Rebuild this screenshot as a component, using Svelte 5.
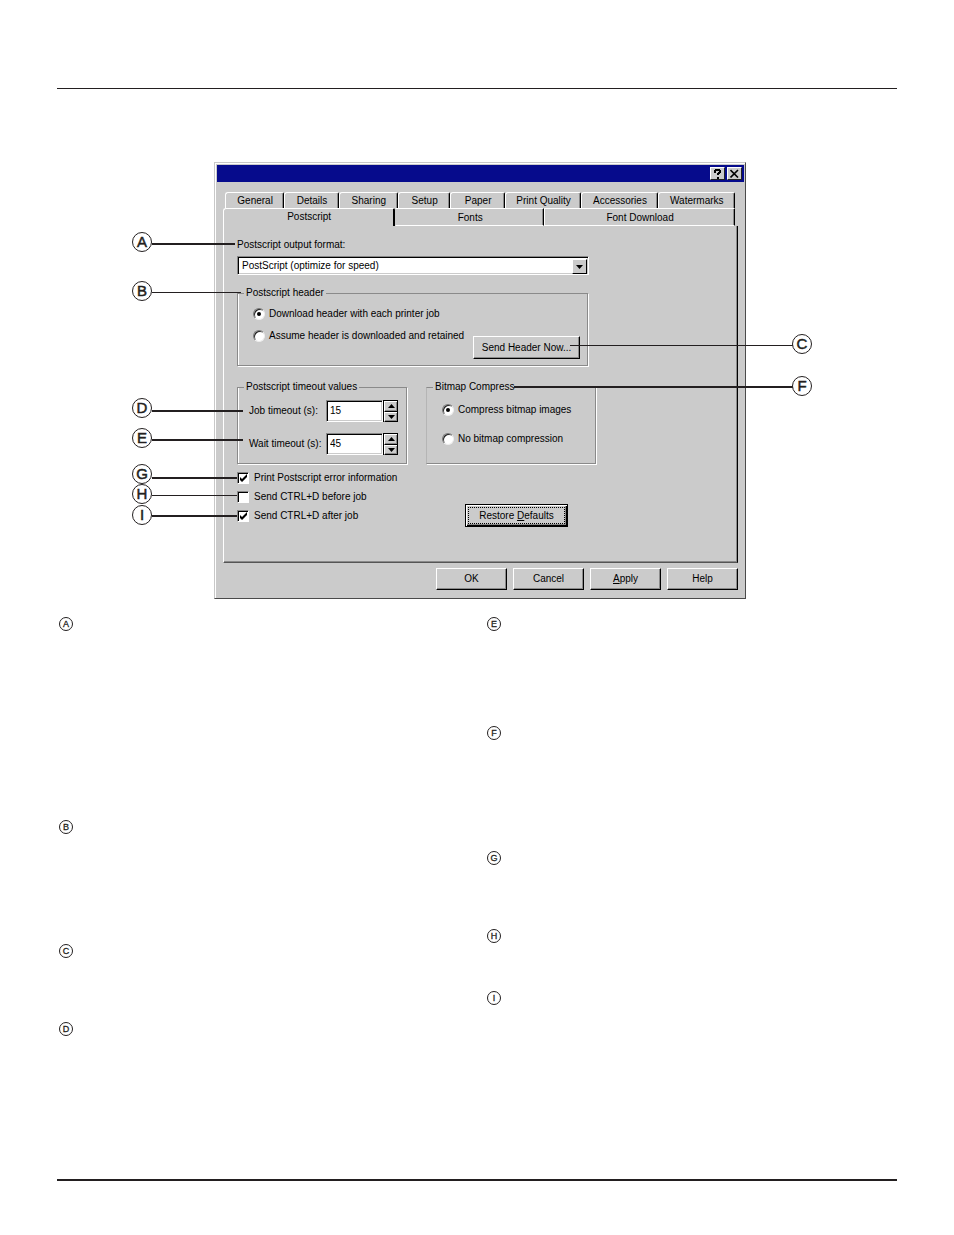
<script>
  const topTabs = [
    ['General', 59], ['Details', 54], ['Sharing', 59], ['Setup', 52],
    ['Paper', 54], ['Print Quality', 77], ['Accessories', 77], ['Watermarks', 78]
  ];
  let format = $state('speed');
  let header = $state('download');
  let bitmap = $state('compress');
  let job = $state(15);
  let wait = $state(45);
  let printErrors = $state(true);
  let before = $state(false);
  let after = $state(true);

  // Callout leaders, measured from the dialog's top left corner.
  const callouts = [
    { id: 'A', y: 79, line: 80, end: 20, w: 2 },
    { id: 'B', y: 128, line: 129, end: 26, w: 1 },
    { id: 'D', y: 245, line: 247, end: 28, w: 2 },
    { id: 'E', y: 275, line: 276, end: 28, w: 2 },
    { id: 'G', y: 311, line: 314, end: 22, w: 2 },
    { id: 'H', y: 331, line: 332, end: 22, w: 1 },
    { id: 'I', y: 352, line: 352, end: 22, w: 2 },
    { id: 'C', y: 181, line: 182, end: 355, w: 1, right: true },
    { id: 'F', y: 223, line: 223, end: 299, w: 2, right: true }
  ];
  const notes = [
    [['A', 203], ['B', 124], ['C', 78], ['D', 78]],
    [['E', 109], ['F', 125], ['G', 78], ['H', 62], ['I', 78]]
  ];
</script>

<main class="page">
  <hr class="rule" />
  <figure class="figure">
    <div class="dialog">
      <header class="titlebar">
        <button class="cap" aria-label="Help on item">
          <svg width="9" height="10" viewBox="0 0 9 10"><path d="M1 1h1V0h5v1h1v3H7v1H6v1H4V4h1V3h1V2H3v2H1zM4 8h2v2H4z" /></svg>
        </button>
        <button class="cap" aria-label="Close">
          <svg width="9" height="9" viewBox="0 0 9 9"><path d="M0.500 1l7.500 7.500M8 1L0.500 8.500" stroke="#000" stroke-width="1.600" /></svg>
        </button>
      </header>

      <div class="tabs" role="tablist">
        <div class="row">
          {#each topTabs as [name, size]}
            <button class="tab" role="tab" aria-selected="false" style="flex-grow:{size}">{name}</button>
          {/each}
        </div>
        <div class="row second">
          <button class="tab selected" role="tab" aria-selected="true">Postscript</button>
          <button class="tab fonts" role="tab" aria-selected="false">Fonts</button>
          <button class="tab download" role="tab" aria-selected="false">Font Download</button>
        </div>
      </div>

      <section class="panel">
        <label class="caption" for="format">Postscript output format:</label>
        <div class="combo sunken">
          <select id="format" bind:value={format}>
            <option value="speed">PostScript (optimize for speed)</option>
          </select>
          <span class="drop" aria-hidden="true"><svg width="7" height="4" viewBox="0 0 7 4"><path d="M0 0h7L3.500 4z" /></svg></span>
        </div>

        <fieldset class="group head">
          <legend>Postscript header</legend>
          <div class="choices">
            <label><input type="radio" name="header" value="download" bind:group={header} />Download header with each printer job</label>
            <label><input type="radio" name="header" value="assume" bind:group={header} />Assume header is downloaded and retained</label>
          </div>
          <button class="btn send">Send Header Now...</button>
        </fieldset>

        <div class="pair">
          <fieldset class="group times">
            <legend>Postscript timeout values</legend>
            <div class="field">
              <label for="job">Job timeout (s):</label>
              <input id="job" class="sunken" type="text" bind:value={job} />
              <span class="spin">
                <button aria-label="Increase job timeout" onclick={() => job++}><svg width="7" height="4" viewBox="0 0 7 4"><path d="M0 4h7L3.500 0z" /></svg></button>
                <button aria-label="Decrease job timeout" onclick={() => job--}><svg width="7" height="4" viewBox="0 0 7 4"><path d="M0 0h7L3.500 4z" /></svg></button>
              </span>
            </div>
            <div class="field">
              <label for="wait">Wait timeout (s):</label>
              <input id="wait" class="sunken" type="text" bind:value={wait} />
              <span class="spin">
                <button aria-label="Increase wait timeout" onclick={() => wait++}><svg width="7" height="4" viewBox="0 0 7 4"><path d="M0 4h7L3.500 0z" /></svg></button>
                <button aria-label="Decrease wait timeout" onclick={() => wait--}><svg width="7" height="4" viewBox="0 0 7 4"><path d="M0 0h7L3.500 4z" /></svg></button>
              </span>
            </div>
          </fieldset>
          <fieldset class="group bitmap">
            <legend>Bitmap Compress</legend>
            <label><input type="radio" name="bitmap" value="compress" bind:group={bitmap} />Compress bitmap images</label>
            <label><input type="radio" name="bitmap" value="none" bind:group={bitmap} />No bitmap compression</label>
          </fieldset>
        </div>

        <div class="bottom">
          <div class="checks">
            <label><input type="checkbox" bind:checked={printErrors} />Print Postscript error information</label>
            <label><input type="checkbox" bind:checked={before} />Send CTRL+D before job</label>
            <label><input type="checkbox" bind:checked={after} />Send CTRL+D after job</label>
          </div>
          <button class="btn restore"><span>Restore <u>D</u>efaults</span></button>
        </div>
      </section>

      <footer class="actions">
        <button class="btn">OK</button>
        <button class="btn">Cancel</button>
        <button class="btn"><span><u>A</u>pply</span></button>
        <button class="btn">Help</button>
      </footer>

      {#each callouts as c}
        <span class="leader" style="top:{c.line}px;height:{c.w}px;left:{c.right ? c.end : -63}px;width:{c.right ? 578 - c.end : c.end + 63}px"></span>
        <span class="mark big" style="top:{c.y - 10}px;left:{c.right ? 577 : -83}px">{c.id}</span>
      {/each}
    </div>
  </figure>

  <div class="notes">
    {#each notes as column}
      <ul>
        {#each column as [id, space]}
          <li style="min-height:{space}px"><span class="mark">{id}</span></li>
        {/each}
      </ul>
    {/each}
  </div>
  <hr class="rule foot" />
</main>

<style>
  :global(body) { margin: 0; background: #fff; }
  * { box-sizing: border-box; }
  .page {
    min-height: 100vh; padding: 88px 57px 54px;
    display: flex; flex-direction: column;
    font: 10px/14px "Liberation Sans", Arial, sans-serif; color: #000;
  }
  .rule { width: 100%; height: 1px; margin: 0; border: 0; background: #231f20; flex: none; }
  .foot { height: 2px; margin-top: auto; }
  .figure { width: 100%; max-width: 538px; margin: 73px auto 0; padding-left: 6px; }
  .dialog {
    position: relative; padding: 1px; background: #cbcbcb;
    border: 1px solid #c8c8c8; border-right-color: #4a4a4a; border-bottom-color: #4a4a4a;
    box-shadow: inset 1px 1px #fff;
  }
  button, input, select { font: inherit; color: inherit; margin: 0; border-radius: 0; }
  button { padding: 0; background: #cbcbcb; }
  svg { display: block; }

  .titlebar {
    height: 17px; margin: 1px 0 0 1px; padding: 2px; background: #060b8c;
    display: flex; justify-content: flex-end; gap: 2px;
  }
  .cap {
    width: 15px; height: 13px; display: grid; place-items: center;
    border: 1px solid #fff; border-right-color: #222; border-bottom-color: #222;
  }

  .tabs { margin: 10px 7px 0; }
  .row { display: flex; height: 16px; padding: 0 2px; }
  .row.second { height: 18px; padding: 0 2px 0 0; }
  .tab {
    flex: 1 1 0; min-width: 0; padding: 1px 0 0 1px; white-space: nowrap;
    border: 0 solid #fff; border-width: 1px 1px 0 1px; border-right-color: #000;
    border-radius: 3px 2px 0 0; box-shadow: inset -1px 0 #8a8a8a;
  }
  .second .tab { border-radius: 0; border-bottom: 1px solid #fff; }
  .second .selected {
    flex-grow: 172; border-color: #fff #000 #cbcbcb #fff; border-width: 1px 2px 0 1px;
    border-radius: 3px 2px 0 0; padding-bottom: 2px; box-shadow: none;
  }
  .fonts { flex-grow: 149; }
  .second .fonts { border-left-color: #cbcbcb; }
  .download { flex-grow: 192; }

  .panel {
    margin: 0 6px 0 7px; padding: 12px 13px 35px;
    border: 1px solid #fff; border-top: 0; border-right: 1px solid #000; border-bottom: 1px solid #555;
    box-shadow: inset -1px -1px #8a8a8a;
  }
  .caption { display: block; }
  .sunken {
    background: #fff; border: 1px solid #888; border-right-color: #fff; border-bottom-color: #fff;
    box-shadow: inset 1px 1px #000, inset -1px -1px #cbcbcb;
  }
  .combo { display: flex; width: 100%; max-width: 352px; height: 19px; margin-top: 4px; padding: 2px; position: relative; }
  .combo select {
    appearance: none; flex: 1; min-width: 0; border: 0; background: none; padding: 0 18px 0 2px; outline: 0; line-height: 14px;
  }
  .drop {
    position: absolute; right: 1px; top: 2px; width: 15px; height: 15px; pointer-events: none;
    display: grid; place-items: center; background: #cbcbcb;
    border: 1px solid #fff; border-right-color: #000; border-bottom-color: #000;
  }

  .group {
    position: relative; margin: 0; padding: 0; min-width: 0;
    border: 1px solid #8a8a8a; box-shadow: 1px 1px #fff, inset 1px 0 #fff;
  }
  .group legend { margin-left: 6px; padding: 0 2px; height: 14px; background: #cbcbcb; white-space: nowrap; }
  .group label, .checks label { display: flex; align-items: center; white-space: nowrap; }
  .head { width: 100%; max-width: 351px; margin-top: 11px; display: flex; }
  .choices { display: flex; flex-direction: column; gap: 8px; padding: 7px 0 22px 15px; }
  input[type='radio'] {
    appearance: none; width: 12px; height: 12px; margin-right: 4px; border-radius: 50%; flex: none;
    background: #fff; border: 1px solid; border-color: #777 #eee #eee #777; box-shadow: inset 1px 1px #222;
    display: grid; place-items: center;
  }
  input[type='radio']:checked::after { content: ''; width: 4px; height: 4px; border-radius: 50%; background: #000; }
  .btn {
    height: 23px; white-space: nowrap;
    border: 1px solid #fff; border-right-color: #000; border-bottom-color: #000; box-shadow: inset -1px -1px #8a8a8a;
  }
  .send { width: 107px; margin: auto 7px 6px auto; flex: none; }

  .pair { display: flex; align-items: flex-start; gap: 19px; margin-top: 14px; }
  .times, .bitmap { width: 170px; height: 84px; }
  .times { padding-left: 11px; }
  .times legend { margin-left: -5px; }
  .field { display: flex; margin-top: 6px; }
  .field + .field { margin-top: 11px; }
  .field label { width: 77px; }
  .field input { width: 57px; height: 22px; padding: 0 4px 2px 3px; min-width: 0; outline: 0; }
  .spin { display: flex; flex-direction: column; width: 15px; height: 22px; border: 1px solid #000; border-width: 1px 1px 0 1px; }
  .spin button {
    flex: 1; display: grid; place-items: center;
    border: 0 solid #fff; border-width: 1px 0 1px 1px; border-bottom-color: #000; box-shadow: inset -1px -1px #8a8a8a;
  }
  .bitmap { padding-left: 15px; border-left-color: #b5b5b5; box-shadow: 1px 1px #fff; }
  .bitmap legend { margin-left: -9px; }
  .bitmap label { margin-top: 9px; }
  .bitmap label + label { margin-top: 15px; }

  .bottom { display: flex; margin-top: 7px; }
  .checks { display: flex; flex-direction: column; gap: 5px; width: 228px; flex: none; }
  input[type='checkbox'] {
    appearance: none; width: 12px; height: 12px; margin-right: 5px; flex: none;
    background-color: #fff; border: 1px solid #888; border-right-color: #fff; border-bottom-color: #fff;
    box-shadow: inset 1px 1px #000;
  }
  input[type='checkbox']:checked {
    background-image: url("data:image/svg+xml,%3Csvg xmlns='http://www.w3.org/2000/svg' width='10' height='10'%3E%3Cpath d='M2 4v3l2 2 5-5V1L4 6z'/%3E%3C/svg%3E");
    background-repeat: no-repeat;
  }
  .restore { width: 103px; margin-top: 33px; padding: 2px; border-color: #000; box-shadow: inset 1px 1px #fff, inset -1px -1px #000, inset -2px -2px #8a8a8a; }
  .restore span { display: block; border: 1px dotted #000; line-height: 15px; }
  .actions { display: flex; justify-content: flex-end; gap: 6px; padding: 5px 6px 7px; }
  .actions .btn { width: 71px; height: 22px; }

  .leader { position: absolute; background: #231f20; }
  .mark {
    display: grid; place-items: center; width: 14px; height: 14px; border: 1px solid #231f20; border-radius: 50%;
    font-size: 9px; line-height: 12px; color: #231f20; -webkit-text-stroke: 0.3px #231f20;
  }
  .mark.big { position: absolute; width: 20px; height: 20px; font-size: 15px; line-height: 18px; background: #fff; -webkit-text-stroke: 0.5px #231f20; }

  .notes { display: grid; grid-template-columns: 1fr 1fr; column-gap: 18px; padding: 18px 0 0 2px; }
  .notes ul { list-style: none; margin: 0; padding: 0; }
</style>
